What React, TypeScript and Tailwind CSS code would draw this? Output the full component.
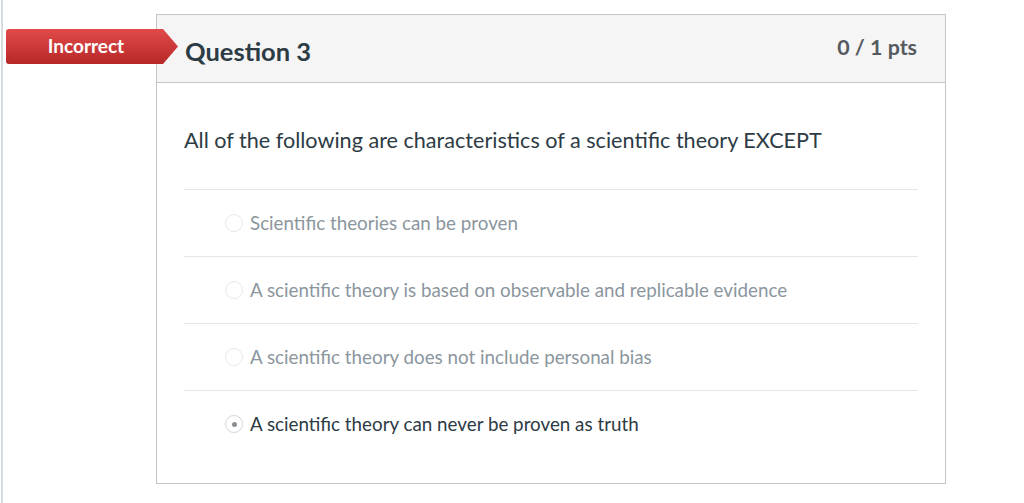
export default function App() {
  const answers = [
    { text: 'Scientific theories can be proven', selected: false },
    { text: 'A scientific theory is based on observable and replicable evidence', selected: false },
    { text: 'A scientific theory does not include personal bias', selected: false },
    { text: 'A scientific theory can never be proven as truth', selected: true },
  ]

  return (
    <div className="min-h-[503px] ml-px border-l-2 border-[#d7dce1] bg-white font-['Lato','Liberation_Sans',sans-serif]">
      <div className="pt-[14px] pl-[153px]">
        <div className="relative w-[790px] border border-[#c2c6c9]">
          <div className="absolute left-[-151px] top-[14px] flex h-[35px] w-[172px] items-center rounded-l-[3px] bg-gradient-to-b from-[#e24a4a] to-[#b72727] pr-[12px] [clip-path:polygon(0_0,calc(100%-15px)_0,100%_50%,calc(100%-15px)_100%,0_100%)]">
            <span className="w-full text-center text-[19px] font-bold text-white">Incorrect</span>
          </div>

          <div className="flex h-[68px] items-center justify-between border-b border-[#c2c6c9] bg-[#f5f5f5] pl-[28px] pr-[28px]">
            <h2 className="mt-[6px] text-[25.5px] font-bold text-[#2d3b45]">Question 3</h2>
            <span className="mb-[3px] text-[21.4px] font-bold text-[#555a5e]">0 / 1 pts</span>
          </div>

          <div className="px-[27px] pt-[43px] pb-[26px]">
            <p className="mb-[35px] text-[21.6px] leading-[28px] text-[#2d3b45]">
              All of the following are characteristics of a scientific theory EXCEPT
            </p>
            {answers.map((a) => (
              <div key={a.text} className="flex h-[67px] items-center border-t border-[#e4e6e8] pl-[41px]">
                <span
                  className={`flex h-[18px] w-[18px] shrink-0 items-center justify-center rounded-full border ${
                    a.selected ? 'border-[#d3d6d9]' : 'border-[#e6e8ea]'
                  }`}
                >
                  {a.selected && <span className="h-[5px] w-[5px] rounded-full bg-[#8a8f94]" />}
                </span>
                <span
                  className={`ml-[7px] text-[18.8px] ${a.selected ? 'text-[#2d3b45]' : 'text-[#8b969e]'}`}
                >
                  {a.text}
                </span>
              </div>
            ))}
          </div>
        </div>
      </div>
    </div>
  )
}
